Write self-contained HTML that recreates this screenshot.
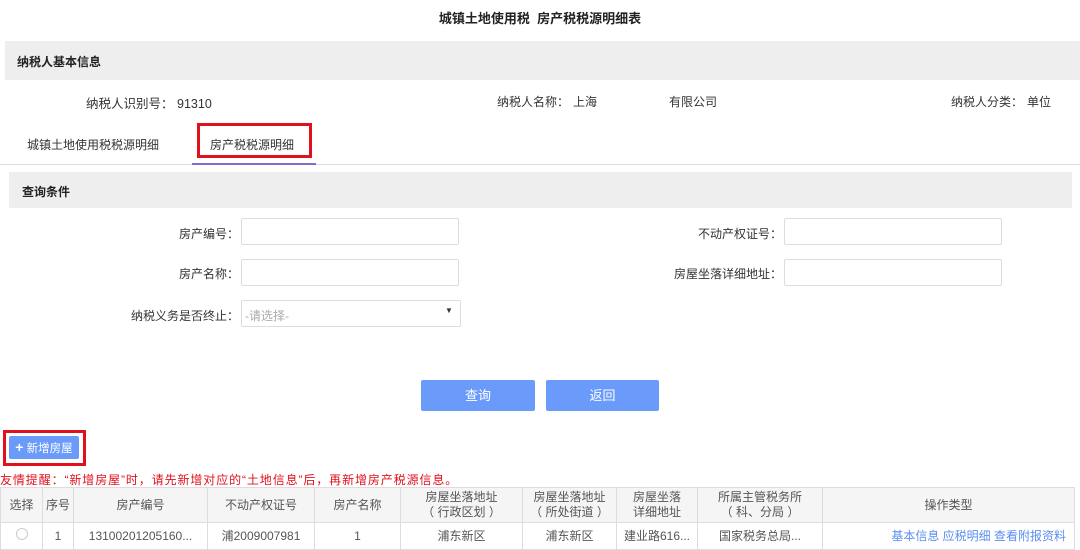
<!DOCTYPE html>
<html><head><meta charset="utf-8"><style>
*{box-sizing:border-box;margin:0;padding:0}
body{width:1080px;height:549px;overflow:hidden;background:#fff;font-family:"Liberation Sans","Noto Sans CJK SC",sans-serif;font-size:12px;color:#333;position:relative}
.a{position:absolute;white-space:nowrap}
.c{display:inline-block;width:12px;text-align:left}
.inp{position:absolute;border:1px solid #ddd;border-radius:2px;height:27px;background:#fff}
.btn{position:absolute;background:#6b9bfa;color:#fff;text-align:center;border-radius:2px;font-size:13px}
table{position:absolute;left:0;top:487px;width:1075px;border-collapse:collapse;font-size:12px;color:#555}
td{border:1px solid #ddd;text-align:center;line-height:15px;padding:0 2px}
thead td{background:#f5f5f5;height:35px}
tbody td{height:27px}
</style></head><body>
<div class="a" style="left:0;width:1080px;text-align:center;top:8px;font-size:13px;font-weight:bold;color:#222">城镇土地使用税&nbsp; 房产税税源明细表</div>
<div class="a" style="left:5px;top:41px;width:1075px;height:39px;background:#eee"></div>
<div class="a" style="left:17px;top:53px;font-weight:bold;color:#222">纳税人基本信息</div>
<div class="a" style="left:86px;top:93px;font-size:12.5px">纳税人识别号<span class="c" style="width:16px">：</span>91310</div>
<div class="a" style="left:497px;top:93px">纳税人名称<span class="c" style="width:16px">：</span>上海</div>
<div class="a" style="left:669px;top:93px">有限公司</div>
<div class="a" style="left:951px;top:93px">纳税人分类<span class="c" style="width:16px">：</span>单位</div>
<div class="a" style="left:27px;top:136px">城镇土地使用税税源明细</div>
<div class="a" style="left:197px;top:123px;width:115px;height:35px;border:3px solid #e0111c"></div>
<div class="a" style="left:210px;top:136px">房产税税源明细</div>
<div class="a" style="left:0;top:164px;width:1080px;height:1px;background:#ddd"></div>
<div class="a" style="left:192px;top:163px;width:124px;height:2px;background:#7d6fd0"></div>
<div class="a" style="left:9px;top:172px;width:1063px;height:36px;background:#eee"></div>
<div class="a" style="left:22px;top:183px;font-weight:bold;color:#222">查询条件</div>
<div class="a" style="left:100px;width:139px;text-align:right;top:225px">房产编号<span class="c">：</span></div>
<div class="inp" style="left:241px;top:218px;width:218px"></div>
<div class="a" style="left:600px;width:182px;text-align:right;top:225px">不动产权证号<span class="c">：</span></div>
<div class="inp" style="left:784px;top:218px;width:218px"></div>
<div class="a" style="left:100px;width:139px;text-align:right;top:265px">房产名称<span class="c">：</span></div>
<div class="inp" style="left:241px;top:259px;width:218px"></div>
<div class="a" style="left:600px;width:182px;text-align:right;top:265px">房屋坐落详细地址<span class="c">：</span></div>
<div class="inp" style="left:784px;top:259px;width:218px"></div>
<div class="a" style="left:100px;width:139px;text-align:right;top:307px">纳税义务是否终止<span class="c">：</span></div>
<div class="inp" style="left:241px;top:300px;width:220px"><span class="a" style="left:3px;top:6px;color:#aaa">-请选择-</span><span class="a" style="left:203px;top:5px;font-size:8px;color:#333">▼</span></div>
<div class="btn" style="left:421px;top:380px;width:114px;height:31px;line-height:31px">查询</div>
<div class="btn" style="left:546px;top:380px;width:113px;height:31px;line-height:31px">返回</div>
<div class="a" style="left:3px;top:430px;width:83px;height:36px;border:3px solid #e0111c"></div>
<div class="btn" style="left:9px;top:436px;width:70px;height:23px;line-height:23px;font-size:11.5px"><b style="font-size:14px">+</b> 新增房屋</div>
<div class="a" style="left:0;top:471px;color:#e0111c;letter-spacing:0.9px">友情提醒：“新增房屋”时，请先新增对应的“土地信息”后，再新增房产税源信息。</div>
<table>
<colgroup><col style="width:42px"><col style="width:31px"><col style="width:134px"><col style="width:107px"><col style="width:86px"><col style="width:122px"><col style="width:94px"><col style="width:81px"><col style="width:125px"><col></colgroup>
<thead><tr><td>选择</td><td>序号</td><td>房产编号</td><td>不动产权证号</td><td>房产名称</td><td>房屋坐落地址<br>（ 行政区划 ）</td><td>房屋坐落地址<br>（ 所处街道 ）</td><td>房屋坐落<br>详细地址</td><td>所属主管税务所<br>（ 科、分局 ）</td><td>操作类型</td></tr></thead>
<tbody><tr><td><span style="display:inline-block;width:12px;height:12px;border:1px solid #ccc;border-radius:50%"></span></td><td>1</td><td>13100201205160...</td><td>浦2009007981</td><td>1</td><td>浦东新区</td><td>浦东新区</td><td>建业路616...</td><td>国家税务总局...</td><td style="color:#5b8ef0;text-align:right;padding-right:8px">基本信息 应税明细 查看附报资料</td></tr></tbody>
</table>
</body></html>
